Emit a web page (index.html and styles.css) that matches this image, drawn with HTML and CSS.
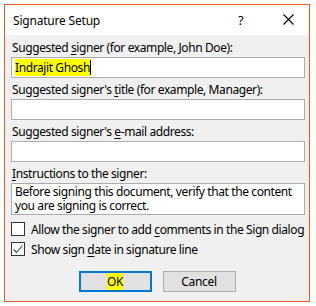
FILE: index.html
```html
<!DOCTYPE html>
<html lang="en">
<head>
  <meta charset="UTF-8">
  <meta name="viewport" content="width=device-width, initial-scale=1.0">
  <title>Signature Setup</title>
  <link rel="stylesheet" href="styles.css">
</head>
<body>
  <div class="dialog">
    <div class="dialog__title">
      <span class="dialog__caption">Signature Setup</span>
      <span class="dialog__help">?</span>
      <span class="dialog__close">
        <svg width="11" height="11" viewBox="0 0 11 11"><path d="M0.5 0.5 L10.5 10.5 M10.5 0.5 L0.5 10.5" stroke="#000" stroke-width="1.1" fill="none"/></svg>
      </span>
    </div>
    <div class="dialog__body">
      <label class="field__label">Suggested <u>s</u>igner (for example, John Doe):</label>
      <div class="field__input"><span class="mark">Indrajit Ghosh</span><span class="caret"></span></div>

      <label class="field__label">Suggested signer's <u>t</u>itle (for example, Manager):</label>
      <div class="field__input"></div>

      <label class="field__label">Suggested signer's <u>e</u>-mail address:</label>
      <div class="field__input"></div>

      <label class="field__label"><u>I</u>nstructions to the signer:</label>
      <div class="field__area">
        <div class="field__line">Before signing this document, verify that the content</div>
        <div class="field__line">you are signing is correct.</div>
      </div>

      <div class="check">
        <span class="check__box"></span>
        <span class="check__text">Allow the signer to add <u>c</u>omments in the Sign dialog</span>
      </div>
      <div class="check check--second">
        <span class="check__box">
          <svg width="12" height="12" viewBox="0 0 12 12"><path d="M1.5 6.5 L4.5 9.5 L10.5 2.5" stroke="#444" stroke-width="1.1" fill="none"/></svg>
        </span>
        <span class="check__text">Show sign <u>d</u>ate in signature line</span>
      </div>

      <div class="buttons">
        <button class="btn btn--default"><span class="mark">OK</span></button>
        <button class="btn">Cancel</button>
      </div>
    </div>
  </div>
</body>
</html>
```

FILE: styles.css
```css
*{
  box-sizing:border-box;
}
body{
  margin:0;
  padding:4px;
  background:#fff;
  font-family:"Noto Sans", "Open Sans", sans-serif;
  font-size:12px;
  letter-spacing:-0.4px;
  color:#000;
  white-space:nowrap;
}
.dialog{
  width:306px;
  height:298px;
  border:1px solid #e35a24;
  background:#f0f0f0;
}
.dialog__title{
  display:flex;
  align-items:center;
  height:30px;
  background:#fff;
  padding-left:8px;
}
.dialog__caption{
  flex:1;
  font-size:12px;
  letter-spacing:-0.2px;
}
.dialog__help{
  width:14px;
  margin-right:31px;
  font-size:13px;
}
.dialog__close{
  display:flex;
  width:26px;
  padding-bottom:1px;
}
.dialog__body{
  padding:5px 4px 0 6px;
}
u{
  text-decoration-thickness:1px;
  text-underline-offset:2px;
}
.field__label{
  display:block;
  height:16px;
  line-height:16px;
  padding-left:1px;
  margin-bottom:1px;
}
.field__input{
  display:flex;
  align-items:center;
  height:21px;
  border:1px solid #adadad;
  background:#fff;
  padding-left:3px;
  margin-bottom:4px;
}
.mark{
  background:#ffff00;
}
.caret{
  display:inline-block;
  width:1px;
  height:15px;
  background:#000;
}
.field__area{
  display:flex;
  flex-direction:column;
  justify-content:center;
  height:32px;
  border:1px solid #adadad;
  background:#fff;
  padding:0 3px;
  margin-bottom:7px;
}
.field__line{
  height:14px;
  line-height:14px;
}
.check{
  display:flex;
  align-items:center;
  height:14px;
}
.check--second{
  margin-top:6px;
}
.check__box{
  display:flex;
  align-items:center;
  justify-content:center;
  width:14px;
  height:14px;
  border:1px solid #333;
  background:#fff;
  margin-right:6px;
}
.buttons{
  display:flex;
  justify-content:center;
  gap:11px;
  margin-top:15px;
  padding-right:2px;
}
.btn{
  width:73px;
  height:21px;
  border:1px solid #adadad;
  background:#e1e1e1;
  font-family:"Noto Sans", "Open Sans", sans-serif;
  font-size:12px;
  letter-spacing:-0.3px;
  padding:0;
  color:#000;
}
.btn--default{
  border:2px solid #0078d7;
}
```
